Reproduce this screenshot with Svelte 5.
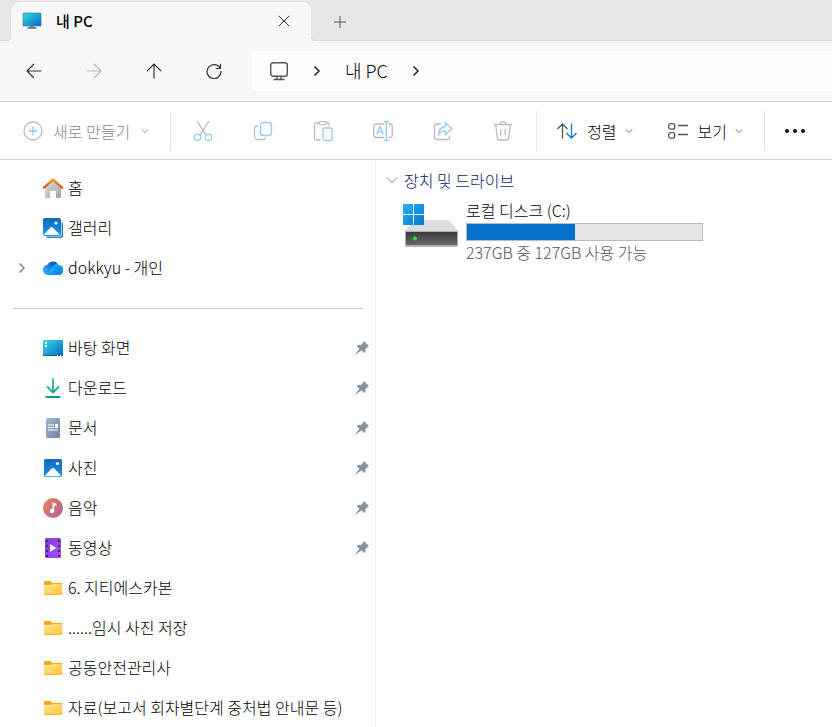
<script lang="ts">
    type Place = { icon: string; label: string; expandable?: boolean; pinned?: boolean };

    const topPlaces: Place[] = [
        { icon: "home", label: "홈" },
        { icon: "gallery", label: "갤러리" },
        { icon: "cloud", label: "dokkyu - 개인", expandable: true },
    ];

    const quickPlaces: Place[] = [
        { icon: "desktop", label: "바탕 화면", pinned: true },
        { icon: "download", label: "다운로드", pinned: true },
        { icon: "document", label: "문서", pinned: true },
        { icon: "picture", label: "사진", pinned: true },
        { icon: "music", label: "음악", pinned: true },
        { icon: "video", label: "동영상", pinned: true },
        { icon: "folder", label: "6. 지티에스카본" },
        { icon: "folder", label: "......임시 사진 저장" },
        { icon: "folder", label: "공동안전관리사" },
        { icon: "folder", label: "자료(보고서 회차별단계 중처법 안내문 등)" },
    ];

    const fileActions = [
        { icon: "cut", label: "잘라내기" },
        { icon: "copy", label: "복사" },
        { icon: "paste", label: "붙여넣기" },
        { icon: "rename", label: "이름 바꾸기" },
        { icon: "share", label: "공유" },
        { icon: "trash", label: "삭제" },
    ];

    const drive = { name: "로컬 디스크 (C:)", total: 237, free: 127 };
    const usedPercent = Math.round(((drive.total - drive.free) / drive.total) * 100);
</script>

<svelte:head>
    <title>내 PC</title>
</svelte:head>

<!-- gradients shared by the icons -->
<svg class="defs" aria-hidden="true">
    <defs>
        <linearGradient id="g-screen" x1="0" y1="0" x2="1" y2="1">
            <stop offset="0" stop-color="#38dbe4" /><stop offset="1" stop-color="#0668c4" />
        </linearGradient>
        <linearGradient id="g-blue" x1="0" y1="0" x2="0" y2="1">
            <stop offset="0" stop-color="#1068bd" /><stop offset="1" stop-color="#1d95e8" />
        </linearGradient>
        <linearGradient id="g-wall" x1="0" y1="0" x2="1" y2="1">
            <stop offset="0" stop-color="#e0e0e0" /><stop offset="1" stop-color="#a3a3a3" />
        </linearGradient>
        <linearGradient id="g-roof" x1="0" y1="0" x2="0" y2="1">
            <stop offset="0" stop-color="#f8940f" /><stop offset="1" stop-color="#d9531e" />
        </linearGradient>
        <linearGradient id="g-cloud" x1="0" y1="0" x2="1" y2="1">
            <stop offset="0" stop-color="#1a9af5" /><stop offset="1" stop-color="#10b6fa" />
        </linearGradient>
        <linearGradient id="g-cloud-left" x1="0" y1="1" x2="1" y2="0">
            <stop offset="0" stop-color="#39b5ff" /><stop offset="1" stop-color="#0746b8" />
        </linearGradient>
        <linearGradient id="g-green" gradientUnits="userSpaceOnUse" x1="0" y1="0" x2="0" y2="20">
            <stop offset="0" stop-color="#32c28c" /><stop offset="1" stop-color="#0b9d84" />
        </linearGradient>
        <linearGradient id="g-doc" x1="0" y1="0" x2="1" y2="1">
            <stop offset="0" stop-color="#a6b8cc" /><stop offset="1" stop-color="#6a83a5" />
        </linearGradient>
        <linearGradient id="g-music" x1="0" y1="0" x2="1" y2="1">
            <stop offset="0" stop-color="#ed8459" /><stop offset="1" stop-color="#a9609b" />
        </linearGradient>
        <linearGradient id="g-video" x1="0" y1="0" x2="1" y2="1">
            <stop offset="0" stop-color="#7b41d6" /><stop offset="1" stop-color="#a94df0" />
        </linearGradient>
        <linearGradient id="g-folder" x1="0" y1="0" x2="1" y2="1">
            <stop offset="0" stop-color="#ffe59b" /><stop offset="1" stop-color="#fcc432" />
        </linearGradient>
        <linearGradient id="g-drive" x1="0" y1="0" x2="0" y2="1">
            <stop offset="0" stop-color="#3b3b3b" /><stop offset="1" stop-color="#686868" />
        </linearGradient>
        <linearGradient id="g-windows" x1="0" y1="0" x2="1" y2="1">
            <stop offset="0" stop-color="#2bb0f4" /><stop offset="1" stop-color="#0078d4" />
        </linearGradient>
    </defs>
</svg>

{#snippet chevronDown()}
    <svg class="chevron" width="8" height="8" viewBox="0 0 8 8" aria-hidden="true">
        <path d="M.7 2.3 4 5.5l3.3-3.2" />
    </svg>
{/snippet}

{#snippet chevronRight()}
    <svg class="crumb-arrow" width="8" height="12" viewBox="0 0 8 12" aria-hidden="true">
        <path d="M1.5 1.5 6 6l-4.5 4.5" />
    </svg>
{/snippet}

{#snippet placeIcon(name: string)}
    <svg class="place-icon" width="20" height="20" viewBox="0 0 20 20" aria-hidden="true">
        {#if name === "home"}
            <path d="M2 9 10 2l8 7v10q0 1-1 1h-4v-7H7v7H3q-1 0-1-1z" fill="url(#g-wall)" />
            <path d="M1 9.7 10 1.6l9 8.1" fill="none" stroke="url(#g-roof)" stroke-width="2.3" stroke-linecap="round" stroke-linejoin="round" />
        {:else if name === "gallery"}
            <path d="M4 4h14q2 0 2 2v12q0 2-2 2H5q-2 0-2-2z" fill="#2a7fbe" />
            <rect x="0" y="0" width="18.6" height="18.6" rx="2" fill="#fff" />
            <rect x="0" y="0" width="18" height="18" rx="2" fill="url(#g-blue)" />
            <path d="m1 16.3 6.4-6.7q1.2-1 2.4 0l6.7 6.7Q16 17 15 17H2q-.8 0-1-.7z" fill="#f2f8ff" />
            <circle cx="13" cy="5" r="1.6" fill="#fff" />
        {:else if name === "cloud"}
            <path d="M5 17a5 5 0 0 1-.7-9.900A6.500 6.500 0 0 1 15.500 7a5 5 0 0 1 .3 10z" fill="url(#g-cloud)" />
            <path d="M2.200 16C-1.400 12.500.4 7.400 4.300 7.100 6.500 2.700 12 2.300 14.600 5.600 9.500 6.300 7 14.800 2.200 16z" fill="url(#g-cloud-left)" />
            <path d="M5 17c4 0 5.400-4.400 8.100-7.400 2.700-2.300 5.800-.5 6.700 2.400.4 3-1.600 5-4 5z" fill="#138cf5" />
        {:else if name === "desktop"}
            <rect x="0" y="2" width="20" height="16" rx="1" fill="url(#g-screen)" />
            <path d="M2 4h2v2H2zm0 3h2v2H2z" fill="#eaffff" />
            <path d="M0 17h20v1H0z" fill="#176096" />
            <path d="M14 17h1v1h-1zm3 0h1v1h-1z" fill="#fff" />
        {:else if name === "download"}
            <path d="M10 1v13M4.500 9l5.500 5.500L15.500 9M3.300 19h13.400" fill="none" stroke="url(#g-green)" stroke-width="1.800" stroke-linecap="round" stroke-linejoin="round" />
        {:else if name === "document"}
            <rect x="3" y="0" width="14" height="20" rx="1.500" fill="url(#g-doc)" />
            <path d="M5 7h6M5 9.500h6M5 12h10" stroke="#fff" stroke-width="1.200" />
            <path d="M12 6h3v4h-3z" fill="#fff" />
        {:else if name === "picture"}
            <rect x="1" y="1" width="18" height="18" rx="1.500" fill="url(#g-blue)" />
            <path d="m2 17.500 6.600-7q1.400-1 2.800 0l6.600 7q-.5.800-1.500.800h-13q-1 0-1.500-.8z" fill="#f4f9ff" />
            <circle cx="14.500" cy="5.500" r="1.600" fill="#fff" />
        {:else if name === "music"}
            <circle cx="10" cy="10" r="10" fill="url(#g-music)" />
            <circle cx="9" cy="13" r="2.200" fill="#fff" />
            <path d="M9.500 4.500q3.800 0 4 2.200v1.500q-1.200-.8-2.300-.7V13H9.500z" fill="#fff" />
        {:else if name === "video"}
            <rect x="2" y="0" width="16" height="20" rx="1.500" fill="url(#g-video)" />
            <path d="M3 2h2v2H3zm0 5h2v2H3zm0 5h2v2H3zm0 5h2v2H3zM15 2h2v2h-2zm0 5h2v2h-2zm0 5h2v2h-2zm0 5h2v2h-2z" fill="#452079" />
            <path d="m7 6 6.500 4L7 14z" fill="#f3eaff" />
        {:else}
            <path d="M1 4q0-1 1-1h5q1 0 1.500 1l.5 1h10v2H1z" fill="#f3ab15" />
            <path d="M1 7.500h7L9.500 6H19v10.500H1z" fill="url(#g-folder)" />
            <path d="M1 16.500h18" stroke="#efb332" />
        {/if}
    </svg>
{/snippet}

{#snippet placeRow(place: Place)}
    <li>
        {#if place.expandable}
            <button class="expand" aria-label="확장">
                {@render chevronRight()}
            </button>
        {:else}
            <span class="expand"></span>
        {/if}
        <a class="place" href="#place">
            {@render placeIcon(place.icon)}
            <span class="place-label">{place.label}</span>
            {#if place.pinned}
                <svg class="pin" width="14" height="14" viewBox="0 0 14 14" aria-hidden="true">
                    <path d="M8.300.8q.8-.7 1.500 0l3.500 3.600q.7 1-.2 1.600l-2 1-.7 1.200.1 3.100-1.300.5-2.700-2.500L1.400 13H.8v-.7L4.500 8 2 5.300l.5-1.400 3.200.1 1.400-.9z" />
                </svg>
            {/if}
        </a>
    </li>
{/snippet}

<div class="explorer">
    <header class="tabs">
        <div class="tab">
            <svg width="20" height="18" viewBox="0 0 20 18" aria-hidden="true">
                <path d="M8 13h4v3H8z" fill="#8d9499" />
                <path d="M5.500 16h9" stroke="#5c666c" stroke-width="1.500" />
                <rect x="1" y="1" width="18" height="13" rx=".5" fill="url(#g-screen)" stroke="#22769d" stroke-width=".6" />
            </svg>
            <span class="tab-title">내 PC</span>
            <button class="tab-close" aria-label="탭 닫기">
                <svg width="12" height="12" viewBox="0 0 12 12" aria-hidden="true">
                    <path d="m.8.8 10.400 10.400M11.200.8.8 11.200" />
                </svg>
            </button>
        </div>
        <button class="tab-new" aria-label="새 탭 추가">
            <svg width="12" height="12" viewBox="0 0 12 12" aria-hidden="true">
                <path d="M6 0v12M0 6h12" />
            </svg>
        </button>
    </header>

    <div class="navbar">
        <button aria-label="뒤로">
            <svg width="16" height="16" viewBox="0 0 16 16"><path d="M15.500 8H1M8 1 1 8l7 7" /></svg>
        </button>
        <button aria-label="앞으로" disabled>
            <svg width="16" height="16" viewBox="0 0 16 16"><path d="M.5 8H15M8 1l7 7-7 7" /></svg>
        </button>
        <button aria-label="위로">
            <svg width="16" height="16" viewBox="0 0 16 16"><path d="M8 15.500V1M1 8l7-7 7 7" /></svg>
        </button>
        <button aria-label="새로 고침">
            <svg width="16" height="16" viewBox="0 0 16 16"><path d="M14.300 5.500A7 7 0 1 0 15 8M14.500.8v4.700H9.800" /></svg>
        </button>
        <nav class="address" aria-label="주소">
            <svg class="monitor" width="20" height="20" viewBox="0 0 20 20" aria-hidden="true">
                <rect x="1.700" y="1.700" width="16.600" height="13.600" rx="2.500" />
                <path d="M8 15.500V18m4-2.500V18m-7.500.5h11" />
            </svg>
            {@render chevronRight()}
            <a href="#pc">내 PC</a>
            {@render chevronRight()}
        </nav>
    </div>

    <div class="toolbar">
        <button class="command new" disabled>
            <svg width="20" height="20" viewBox="0 0 20 20" aria-hidden="true">
                <circle cx="10" cy="10" r="9" />
                <path class="accent" d="M10 5.500v9M5.500 10h9" />
            </svg>
            <span>새로 만들기</span>
            {@render chevronDown()}
        </button>
        <div class="file-actions">
            {#each fileActions as action (action.icon)}
                <button disabled aria-label={action.label}>
                    <svg width="20" height="20" viewBox="0 0 20 20" aria-hidden="true">
                        {#if action.icon === "cut"}
                            <path d="m4 0 8.800 13.800M16 0 7.200 13.800" />
                            <circle class="accent" cx="4.500" cy="16.300" r="3.200" />
                            <circle class="accent" cx="15.500" cy="16.300" r="3.200" />
                        {:else if action.icon === "copy"}
                            <path d="M5 5H4Q1.500 5 1.500 7.500V15q0 3.500 3.500 3.500h5q2.500 0 2.500-2" />
                            <rect class="accent" x="7.500" y="1.500" width="11" height="13" rx="3" />
                        {:else if action.icon === "paste"}
                            <path d="M6 2H3Q1.500 2 1.500 3.500v14Q1.500 19 3 19h4.500M13 2h1.500Q16 2 16 3.500V5" />
                            <rect x="6" y=".6" width="7" height="3" rx="1.500" />
                            <rect class="accent" x="10" y="7" width="9" height="12.300" rx="1.500" />
                        {:else if action.icon === "rename"}
                            <path d="M11 3H3.500Q.7 3 .7 5.500v8q0 3 2.800 3H11M15.500 3h1q2.800 0 2.800 2.500v8q0 3-2.800 3h-1" />
                            <path class="accent" d="m3.800 13.500 3.300-8 3.300 8M5 10.800h4.300M10.800.7h5M10.800 19.300h5M13.300.7v18.600" />
                        {:else if action.icon === "share"}
                            <path d="M7.500 3H4Q1.500 3 1.500 5.500V16q0 2.500 2.500 2.500h10q2.500 0 2.500-2.500v-1.500" />
                            <path class="accent" d="M12.500 2 19 7.700l-6.500 5.600v-3.500q-4.500-.2-7 3.700.3-7.200 7-8z" />
                        {:else}
                            <path d="M.8 3.500h18.400M7 3.500Q7 .8 10 .8t3 2.700M2.700 3.500l1.600 13.300q.3 2.200 2.500 2.200h6.400q2.200 0 2.500-2.200l1.600-13.300M7.800 8v6.500M12.200 8v6.500" />
                        {/if}
                    </svg>
                </button>
            {/each}
        </div>
        <div class="view-actions">
            <button class="command">
                <svg width="20" height="20" viewBox="0 0 20 20" aria-hidden="true">
                    <path d="M5.500 17.500V3M.5 8l5-5 5 5" />
                    <path class="accent" d="M14.500 2.500V17M9.500 12l5 5 5-5" />
                </svg>
                <span>정렬</span>
                {@render chevronDown()}
            </button>
            <button class="command">
                <svg width="20" height="20" viewBox="0 0 20 20" aria-hidden="true">
                    <rect x=".7" y="2.700" width="6" height="5.500" rx="2" />
                    <rect x=".7" y="11.700" width="6" height="5.500" rx="2" />
                    <path d="M10 4.500h10M10 13.500h10" />
                </svg>
                <span>보기</span>
                {@render chevronDown()}
            </button>
        </div>
        <button class="more" aria-label="자세히 보기">
            <svg width="20" height="4" viewBox="0 0 20 4" aria-hidden="true">
                <circle cx="2" cy="2" r="2" /><circle cx="10" cy="2" r="2" /><circle cx="18" cy="2" r="2" />
            </svg>
        </button>
    </div>

    <div class="body">
        <nav class="sidebar" aria-label="탐색 창">
            <ul>
                {#each topPlaces as place (place.label)}
                    {@render placeRow(place)}
                {/each}
            </ul>
            <hr />
            <ul>
                {#each quickPlaces as place (place.label)}
                    {@render placeRow(place)}
                {/each}
            </ul>
        </nav>

        <main>
            <h2>
                <button class="group">
                    <svg width="12" height="8" viewBox="0 0 12 8" aria-hidden="true">
                        <path d="m1 1.500 5 5 5-5" />
                    </svg>
                    <span>장치 및 드라이브</span>
                </button>
            </h2>
            <a class="drive" href="#drive">
                <svg width="56" height="44" viewBox="0 0 56 44" aria-hidden="true">
                    <path d="M12 16h34l9 11H2z" fill="#dcdde0" />
                    <path d="M2 27h53v14q0 2-2 2H4q-2 0-2-2z" fill="#b0b0b0" />
                    <path d="M3 28h51v13H3z" fill="url(#g-drive)" />
                    <circle cx="12" cy="34.500" r="2" fill="#25e634" />
                    <path d="M0 0h10v10H0zm11 0h10v10H11zM0 11h10v10H0zm11 0h10v10H11z" fill="url(#g-windows)" />
                </svg>
                <div class="drive-info">
                    <span class="drive-name">{drive.name}</span>
                    <div class="usage" role="meter" aria-label="사용 공간" aria-valuemin="0" aria-valuemax="100" aria-valuenow={usedPercent}>
                        <div class="used" style="width: {usedPercent}%"></div>
                    </div>
                    <span class="drive-free">{drive.total}GB 중 {drive.free}GB 사용 가능</span>
                </div>
            </a>
        </main>
    </div>
</div>

<style>
    :global(body) {
        margin: 0;
    }

    .defs {
        position: absolute;
        width: 0;
        height: 0;
    }

    .explorer {
        display: flex;
        flex-direction: column;
        height: 100vh;
        overflow: hidden;
        background: #fff;
        color: #000;
        font: 300 16px/20px "Noto Sans CJK KR", sans-serif;
    }

    button {
        display: flex;
        align-items: center;
        justify-content: center;
        padding: 0;
        border: 0;
        background: none;
        color: inherit;
        font: inherit;
    }

    a {
        color: inherit;
        text-decoration: none;
    }

    svg {
        flex: none;
    }

    .tabs {
        display: flex;
        height: 41px;
        padding-left: 11px;
        background: #e7e7e7;
        box-shadow: inset 0 -1px #d8d8d8;
    }

    .tab {
        position: relative;
        display: flex;
        align-items: center;
        box-sizing: border-box;
        width: 300px;
        margin-top: 2px;
        padding: 0 15px 2px 11px;
        border-radius: 8px 8px 0 0;
        background: #f8f8f8;
        box-shadow: 0 0 1px #bbb;
        clip-path: inset(-2px -5px 0);
    }

    /* outward curves where the tab meets the bar */
    .tab::before,
    .tab::after {
        content: "";
        position: absolute;
        bottom: 0;
        width: 4px;
        height: 4px;
    }

    .tab::before {
        right: 100%;
        background: radial-gradient(circle at 0 0, #e7e7e7 3px, #d8d8d8 3px 4px, #f8f8f8 4px);
    }

    .tab::after {
        left: 100%;
        background: radial-gradient(circle at 100% 0, #e7e7e7 3px, #d8d8d8 3px 4px, #f8f8f8 4px);
    }

    .tab-title {
        flex: 1;
        margin-left: 14px;
        font-size: 15px;
        font-weight: 500;
    }

    .tab-close,
    .tab-new {
        width: 24px;
        fill: none;
        stroke: #333;
    }

    .tab-new {
        margin: 3px 0 0 17px;
        stroke: #555;
    }

    .navbar {
        display: flex;
        align-items: center;
        gap: 20px;
        height: 60px;
        padding-left: 14px;
        border-bottom: 1px solid #d4d4d4;
        background: #f8f8f8;
    }

    .navbar button {
        width: 40px;
        height: 40px;
        fill: none;
        stroke: #333;
        stroke-width: 1.2;
    }

    .navbar button:disabled {
        stroke: #b5b5b5;
    }

    .address {
        display: flex;
        flex: 1;
        align-items: center;
        gap: 24px;
        height: 40px;
        margin-left: -2px;
        padding-left: 17px;
        border-radius: 5px 0 0 5px;
        background: #fdfdfd;
        font-size: 18px;
    }

    .address a {
        padding-bottom: 2px;
    }

    .monitor {
        fill: none;
        stroke: #555;
        stroke-width: 1.4;
    }

    .crumb-arrow {
        fill: none;
        stroke: #222;
        stroke-width: 1.5;
    }

    .toolbar {
        display: flex;
        align-items: center;
        height: 57px;
        padding: 0 16px 0 23px;
        border-bottom: 1px solid #d4d4d4;
    }

    .toolbar > * + * {
        height: 40px;
        border-left: 1px solid #e6e6e6;
    }

    .toolbar svg {
        fill: none;
        stroke: #555;
        stroke-width: 1.3;
    }

    .toolbar .accent {
        stroke: #0f78d4;
    }

    .toolbar button:disabled {
        color: #888;
    }

    .toolbar button:disabled svg {
        stroke: #bbb;
    }

    .toolbar button:disabled .accent {
        stroke: #94caf4;
    }

    .command span {
        margin: 0 8px 0 10px;
    }

    .new {
        margin-right: 21px;
    }

    .new span {
        margin-right: 11px;
    }

    .toolbar .chevron {
        stroke: #777;
        stroke-width: 1;
    }

    .toolbar button:disabled .chevron {
        stroke: #999;
    }

    .file-actions {
        display: flex;
        align-items: center;
        gap: 20px;
        padding: 0 13px 0 12px;
    }

    .file-actions button {
        width: 40px;
        height: 40px;
    }

    .view-actions {
        display: flex;
        gap: 35px;
        padding: 0 21px 0 20px;
    }

    .toolbar .more {
        padding-left: 20px;
    }

    .toolbar .more svg {
        fill: #111;
        stroke: none;
    }

    .body {
        display: flex;
        flex: 1;
        min-height: 0;
    }

    .sidebar {
        box-sizing: border-box;
        flex: 0 0 376px;
        padding-top: 8px;
        border-right: 1px solid #f0f0f0;
        overflow: hidden;
    }

    ul {
        margin: 0;
        padding: 0;
        list-style: none;
    }

    li {
        display: flex;
        align-items: center;
        height: 40px;
        padding: 0 6px 0 13px;
    }

    hr {
        height: 1px;
        margin: 20px 12px 19px 13px;
        border: 0;
        background: #ccc;
    }

    .expand {
        width: 18px;
        margin-right: 12px;
    }

    .expand .crumb-arrow {
        stroke: #888;
    }

    .place {
        display: flex;
        flex: 1;
        align-items: center;
        gap: 5px;
        min-width: 0;
        white-space: nowrap;
    }

    .place-label {
        flex: 1;
        padding-bottom: 2px;
    }

    .pin {
        fill: #87929b;
    }

    main {
        flex: 1;
        min-width: 0;
        padding: 10px;
    }

    h2 {
        margin: 0;
        font: inherit;
    }

    .group {
        gap: 6px;
        color: #0d2277;
    }

    .group svg {
        fill: none;
        stroke: #888;
    }

    .drive {
        display: flex;
        gap: 7px;
        margin: 10px 0 0 17px;
    }

    .drive > svg {
        margin-top: 4px;
    }

    .drive-info {
        flex: 0 1 237px;
        min-width: 0;
    }

    .drive-name,
    .drive-free {
        display: block;
        white-space: nowrap;
    }

    .drive-free {
        margin-top: 1px;
        color: #555;
    }

    .usage {
        height: 16px;
        margin-top: 3px;
        border: 1px solid #bcbcbc;
        background: #e6e6e6;
    }

    .used {
        height: 100%;
        background: #0570cb;
    }
</style>
